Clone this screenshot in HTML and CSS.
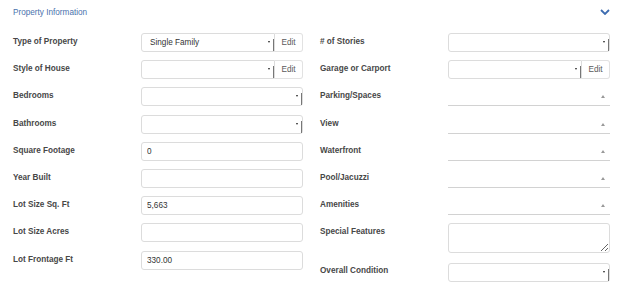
FILE: index.html
```html
<!DOCTYPE html>
<html lang="en">
<head>
  <meta charset="UTF-8">
  <meta name="viewport" content="width=device-width, initial-scale=1.0">
  <title>Property Information</title>
  <link rel="stylesheet" href="styles.css">
</head>
<body>
  <div class="panel">
    <div class="panel-head">
      <span class="panel-title">Property Information</span>
      <svg class="chevron" width="10" height="6" viewBox="0 0 10 6">
        <polyline points="1,1 5,5 9,1" fill="none" stroke="#3d6cb0" stroke-width="1.8"/>
      </svg>
    </div>
    <div class="form-grid">
      <div class="col">
        <div class="row">
          <label>Type of Property</label>
          <div class="field group">
            <div class="select"><span class="value">Single Family</span><span class="caret"></span></div>
            <span class="edit">Edit</span>
          </div>
        </div>
        <div class="row">
          <label>Style of House</label>
          <div class="field group">
            <div class="select"><span class="value"></span><span class="caret"></span></div>
            <span class="edit">Edit</span>
          </div>
        </div>
        <div class="row">
          <label>Bedrooms</label>
          <div class="field">
            <div class="select"><span class="value"></span><span class="caret"></span></div>
          </div>
        </div>
        <div class="row">
          <label>Bathrooms</label>
          <div class="field">
            <div class="select"><span class="value"></span><span class="caret"></span></div>
          </div>
        </div>
        <div class="row">
          <label>Square Footage</label>
          <div class="field"><input type="text" value="0"></div>
        </div>
        <div class="row">
          <label>Year Built</label>
          <div class="field"><input type="text" value=""></div>
        </div>
        <div class="row">
          <label>Lot Size Sq. Ft</label>
          <div class="field"><input type="text" value="5,663"></div>
        </div>
        <div class="row">
          <label>Lot Size Acres</label>
          <div class="field"><input type="text" value=""></div>
        </div>
        <div class="row">
          <label>Lot Frontage Ft</label>
          <div class="field"><input type="text" value="330.00"></div>
        </div>
      </div>

      <div class="col">
        <div class="row">
          <label># of Stories</label>
          <div class="field">
            <div class="select"><span class="value"></span><span class="caret"></span></div>
          </div>
        </div>
        <div class="row">
          <label>Garage or Carport</label>
          <div class="field group">
            <div class="select"><span class="value"></span><span class="caret"></span></div>
            <span class="edit">Edit</span>
          </div>
        </div>
        <div class="row">
          <label>Parking/Spaces</label>
          <div class="field"><div class="multi"><span class="up"></span></div></div>
        </div>
        <div class="row">
          <label>View</label>
          <div class="field"><div class="multi"><span class="up"></span></div></div>
        </div>
        <div class="row">
          <label>Waterfront</label>
          <div class="field"><div class="multi"><span class="up"></span></div></div>
        </div>
        <div class="row">
          <label>Pool/Jacuzzi</label>
          <div class="field"><div class="multi"><span class="up"></span></div></div>
        </div>
        <div class="row">
          <label>Amenities</label>
          <div class="field"><div class="multi"><span class="up"></span></div></div>
        </div>
        <div class="row row-tall">
          <label>Special Features</label>
          <div class="field"><textarea></textarea></div>
        </div>
        <div class="row row-last">
          <label>Overall Condition</label>
          <div class="field">
            <div class="select"><span class="value"></span><span class="caret"></span></div>
          </div>
        </div>
      </div>
    </div>
  </div>
</body>
</html>
```

FILE: styles.css
```css
body {
  margin: 0;
  background: #ffffff;
  font-family: "Liberation Sans", Arial, sans-serif;
  font-size: 8.2px;
  color: #333333;
}
.panel {
  width: 624px;
}
.panel-head {
  display: flex;
  align-items: center;
  justify-content: space-between;
  height: 25px;
  padding: 0 14px 0 13px;
}
.panel-title {
  color: #4a72ad;
}
.chevron {
  display: block;
  margin-top: -2px;
}
.form-grid {
  display: flex;
  gap: 17px;
  padding: 8px 0 0 13px;
}
.col {
  display: flex;
  flex-direction: column;
}
.row {
  display: flex;
  align-items: flex-start;
  height: 27.2px;
}
.row-tall {
  height: 39.2px;
}
.row label {
  width: 128px;
  padding-top: 2px;
  line-height: 14px;
  font-weight: bold;
  color: #474747;
}
.row-last label {
  padding-top: 1px;
}
.field {
  width: 162px;
  display: flex;
}
.select,
input,
textarea {
  box-sizing: border-box;
  height: 19px;
  border: 1px solid #dcdcdc;
  border-radius: 3px;
  background: #ffffff;
  font-family: inherit;
  font-size: 8.2px;
  color: #333333;
}
.select {
  flex: 1;
  display: flex;
  align-items: center;
  padding-left: 8px;
}
.select .value {
  flex: 1;
}
.caret {
  position: relative;
  width: 6px;
  height: 12px;
  margin-top: 5px;
  border-right: 1px solid #777777;
}
.caret::after {
  content: "";
  position: absolute;
  left: 1px;
  top: 2px;
  border-left: 1.5px solid transparent;
  border-right: 1.5px solid transparent;
  border-top: 2px solid #222222;
}
.group .select {
  border-radius: 3px 0 0 3px;
}
.edit {
  box-sizing: border-box;
  width: 28px;
  height: 19px;
  line-height: 17px;
  text-align: center;
  border: 1px solid #e2e2e2;
  border-left: none;
  border-radius: 0 3px 3px 0;
  color: #5a5a5a;
}
input {
  width: 100%;
  padding: 0 5px;
  outline: none;
}
textarea {
  width: 100%;
  height: 30px;
  margin: 0;
  resize: vertical;
  padding: 3px 5px;
}
.multi {
  box-sizing: border-box;
  width: 100%;
  height: 19px;
  border-bottom: 1px solid #d2d2d2;
  display: flex;
  align-items: center;
  justify-content: flex-end;
  padding-right: 5px;
}
.up {
  width: 0;
  height: 0;
  margin-top: 1px;
  border-left: 2px solid transparent;
  border-right: 2px solid transparent;
  border-bottom: 3px solid #999999;
}
```
